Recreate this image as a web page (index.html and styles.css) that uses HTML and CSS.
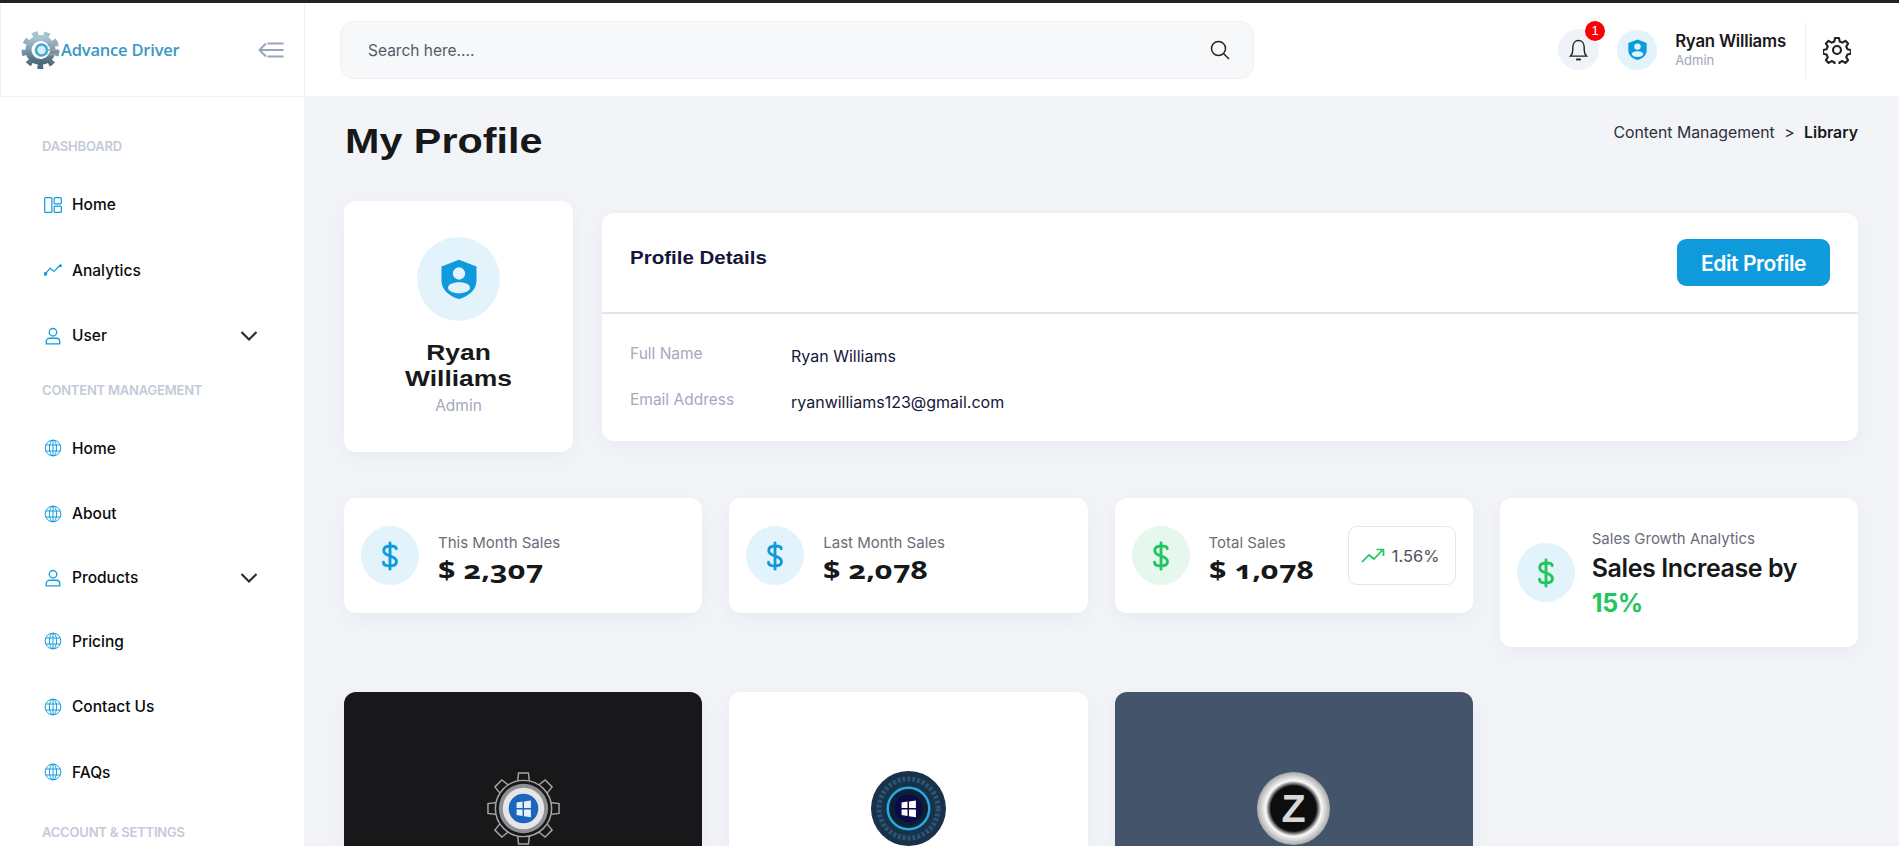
FILE: index.html
```html
<!doctype html>
<html lang="en">
  <head>
    <meta charset="utf-8">
    <title>My Profile</title>
    <link rel="stylesheet" href="styles.css">
  </head>
  <body>
    <svg class="sprite" xmlns="http://www.w3.org/2000/svg">
      <symbol id="i-globe" viewBox="0 0 24 24" fill="none" stroke="currentColor" stroke-width="1.3">
        <circle cx="12" cy="12" r="10.5"/>
        <ellipse cx="12" cy="12" rx="4.8" ry="10.5"/>
        <path d="M12 1.5v21M2.4 8h19.2M2.4 16h19.2"/>
      </symbol>
      <symbol id="i-user" viewBox="0 0 24 24" fill="none" stroke="currentColor" stroke-width="1.7">
        <circle cx="12" cy="7" r="5"/>
        <path d="M3 22.500v-3.200c0-2.600 2-4.300 4.500-4.300h9c2.500 0 4.500 1.700 4.500 4.300v3.200z"/>
      </symbol>
      <symbol id="i-chev" viewBox="0 0 18 12" fill="none" stroke="currentColor" stroke-width="2.200">
        <path d="M1.500 2l7.500 7.500L16.500 2"/>
      </symbol>
      <symbol id="i-shield" viewBox="0 0 24 24">
        <path fill="currentColor" fill-rule="evenodd" d="M12 0.500l10.500 4v8.500c0 5.500-5 9.500-10.500 11-5.500-1.500-10.500-5.500-10.500-11V4.500zM12 5a3.700 3.700 0 1 0 0 7.400A3.700 3.700 0 0 0 12 5zm0 9c-3.700 0-6.600 1.400-6.600 3.200S8.300 20.500 12 20.500s6.600-1.500 6.600-3.300S15.700 14 12 14z"/>
      </symbol>
      <symbol id="i-dollar" viewBox="0 0 24 24" fill="none" stroke="currentColor" stroke-width="2.300" stroke-linecap="round">
        <path d="M12 1.500v21M17 6.200C17 4.500 14.800 4 12 4 8.800 4 7 5.300 7 7.700c0 5 10.200 3.300 10.200 8.700C17.200 18.800 15.200 20 12 20c-3 0-5.200-1-5.200-3"/>
      </symbol>
      <linearGradient id="gear-fill" x1="0" y1="0" x2="0" y2="1">
        <stop offset="0" stop-color="#a9c4d1"/>
        <stop offset="1" stop-color="#4f6a7b"/>
      </linearGradient>
      <radialGradient id="ring-fill">
        <stop offset="0.620" stop-color="#0d0d0d"/>
        <stop offset="0.760" stop-color="#fafafa"/>
        <stop offset="1" stop-color="#a8a8a8"/>
      </radialGradient>
    </svg>

    <div class="app">
      <!-- sidebar -->
      <aside class="sidebar">
        <div class="brand">
          <svg class="brand-gear" viewBox="0 0 40 40">
            <circle cx="20" cy="20" r="15.500" fill="none" stroke="url(#gear-fill)" stroke-width="7" stroke-dasharray="5.400 5.420"/>
            <circle cx="20" cy="20" r="12" fill="none" stroke="url(#gear-fill)" stroke-width="6"/>
            <circle cx="21" cy="20" r="8.500" fill="#fff"/>
            <circle cx="21" cy="20" r="5.500" fill="#d9eef6" stroke="#3fa9d0" stroke-width="2.500"/>
            <path d="M27 15.500h11M27 20h11M27 24.500h11" stroke="#8fa6b3" stroke-width="1.400"/>
          </svg>
          <span class="brand-name">Advance Driver</span>
          <svg class="brand-toggle" viewBox="0 0 26 16" fill="none" stroke="#9aa5bb" stroke-width="2">
            <path d="M8 1.500L1.500 8 8 14.500M1.500 8h24M9.500 1.500h16M9.500 14.500h16"/>
          </svg>
        </div>
        <nav class="side-nav">
          <div class="nav-label">DASHBOARD</div>
          <a class="nav-item">
            <svg class="nav-icon" viewBox="0 0 19 17" fill="none" stroke="currentColor" stroke-width="1.300">
              <rect x="0.700" y="0.700" width="7.600" height="15.600" rx="1"/>
              <rect x="10.700" y="0.700" width="7.600" height="6.600" rx="1"/>
              <rect x="10.700" y="9.700" width="7.600" height="6.600" rx="1"/>
            </svg>
            Home
          </a>
          <a class="nav-item">
            <svg class="nav-icon" viewBox="0 0 19 12" fill="none" stroke="currentColor" stroke-width="1.300">
              <path d="M1.500 10l5-6 4 3.500 6-6"/>
              <circle cx="1.500" cy="10" r="1.300" fill="currentColor"/>
              <circle cx="17.300" cy="1.500" r="1" fill="currentColor"/>
            </svg>
            Analytics
          </a>
          <a class="nav-item">
            <svg class="nav-icon"><use href="#i-user"/></svg>
            User
            <svg class="nav-chev"><use href="#i-chev"/></svg>
          </a>
          <div class="nav-label nav-label-next">CONTENT MANAGEMENT</div>
          <a class="nav-item"><svg class="nav-icon"><use href="#i-globe"/></svg>Home</a>
          <a class="nav-item"><svg class="nav-icon"><use href="#i-globe"/></svg>About</a>
          <a class="nav-item nav-item-tight">
            <svg class="nav-icon"><use href="#i-user"/></svg>
            Products
            <svg class="nav-chev"><use href="#i-chev"/></svg>
          </a>
          <a class="nav-item"><svg class="nav-icon"><use href="#i-globe"/></svg>Pricing</a>
          <a class="nav-item"><svg class="nav-icon"><use href="#i-globe"/></svg>Contact Us</a>
          <a class="nav-item"><svg class="nav-icon"><use href="#i-globe"/></svg>FAQs</a>
          <div class="nav-label nav-label-last">ACCOUNT &amp; SETTINGS</div>
        </nav>
      </aside>

      <div class="page">
        <!-- top bar -->
        <header class="topbar">
          <div class="search">
            <span class="search-text">Search here....</span>
            <svg class="search-icon" viewBox="0 0 20 20" fill="none" stroke="#222" stroke-width="1.500">
              <circle cx="8.500" cy="8.500" r="7"/>
              <path d="M13.700 13.700l5.300 5.300"/>
            </svg>
          </div>
          <div class="top-actions">
            <div class="bell">
              <svg class="bell-icon" viewBox="0 0 20 24" fill="none" stroke="#222" stroke-width="1.500">
                <path d="M1.500 19c1.500-1.500 2.500-2.500 2.500-6.500V9.500C4 5.500 6.500 2.500 10 2.500s6 3 6 7v3c0 4 1 5 2.500 6.500z"/>
                <path d="M7.500 22.500h5" stroke-width="2"/>
              </svg>
              <span class="bell-badge">1</span>
            </div>
            <div class="top-avatar"><svg class="top-avatar-icon"><use href="#i-shield"/></svg></div>
            <div class="top-user">
              <div class="top-user-name">Ryan Williams</div>
              <div class="top-user-role">Admin</div>
            </div>
            <div class="top-settings">
              <svg class="gear-icon" viewBox="0 0 24 24" fill="none" stroke="#222" stroke-width="1.800" stroke-linejoin="round">
                <circle cx="12" cy="12" r="3.400"/>
                <path d="M10.300 1.700h3.400l.6 3 2.300 1 2.600-1.600 2.300 2.400-1.600 2.500 1 2.300 3 .7v3.200l-3 .7-1 2.300 1.600 2.500-2.300 2.400-2.600-1.600-2.300 1-.6 3h-3.400l-.6-3-2.300-1-2.600 1.600-2.300-2.400 1.600-2.500-1-2.300-3-.7v-3.200l3-.7 1-2.300-1.600-2.500 2.300-2.400 2.600 1.600 2.300-1z"/>
              </svg>
            </div>
          </div>
        </header>

        <main class="content">
          <div class="title-row">
            <h1>My Profile</h1>
            <div class="crumbs">Content Management <span class="crumbs-sep">&gt;</span> <b>Library</b></div>
          </div>

          <section class="profile-row">
            <div class="card profile-card">
              <div class="profile-avatar"><svg class="profile-avatar-icon"><use href="#i-shield"/></svg></div>
              <div class="profile-name">Ryan Williams</div>
              <div class="profile-role">Admin</div>
            </div>
            <div class="card details-card">
              <div class="details-head">
                <h2>Profile Details</h2>
                <button class="edit-btn">Edit Profile</button>
              </div>
              <dl class="details-body">
                <dt>Full Name</dt>
                <dd>Ryan Williams</dd>
                <dt>Email Address</dt>
                <dd>ryanwilliams123@gmail.com</dd>
              </dl>
            </div>
          </section>

          <section class="stats">
            <div class="card stat">
              <div class="stat-circle"><svg class="stat-dollar"><use href="#i-dollar"/></svg></div>
              <div class="stat-text">
                <div class="stat-label">This Month Sales</div>
                <div class="stat-value">$ 2,307</div>
              </div>
            </div>
            <div class="card stat">
              <div class="stat-circle"><svg class="stat-dollar"><use href="#i-dollar"/></svg></div>
              <div class="stat-text">
                <div class="stat-label">Last Month Sales</div>
                <div class="stat-value">$ 2,078</div>
              </div>
            </div>
            <div class="card stat">
              <div class="stat-circle stat-circle-green"><svg class="stat-dollar green"><use href="#i-dollar"/></svg></div>
              <div class="stat-text">
                <div class="stat-label">Total Sales</div>
                <div class="stat-value">$ 1,078</div>
              </div>
              <div class="trend">
                <svg class="trend-icon" viewBox="0 0 24 16" fill="none" stroke="#22c55e" stroke-width="1.700">
                  <path d="M1 14l7-7 5 4 9-9.500M15.500 1.500H22.500V8"/>
                </svg>
                1.56%
              </div>
            </div>
            <div class="card stat stat-growth">
              <div class="stat-circle"><svg class="stat-dollar green"><use href="#i-dollar"/></svg></div>
              <div class="stat-text">
                <div class="stat-label">Sales Growth Analytics</div>
                <div class="growth-text">Sales Increase by <span class="green">15%</span></div>
              </div>
            </div>
          </section>

          <section class="tiles">
            <div class="card tile tile-dark">
              <svg class="tile-logo" viewBox="0 0 76 76">
                <g fill="#18181a" stroke="#a5a5a5" stroke-width="1.500">
                  <path id="gear-tooth" d="M32 11l1-9h10l1 9z"/>
                  <use href="#gear-tooth" transform="rotate(45 38 38)"/>
                  <use href="#gear-tooth" transform="rotate(90 38 38)"/>
                  <use href="#gear-tooth" transform="rotate(135 38 38)"/>
                  <use href="#gear-tooth" transform="rotate(180 38 38)"/>
                  <use href="#gear-tooth" transform="rotate(225 38 38)"/>
                  <use href="#gear-tooth" transform="rotate(270 38 38)"/>
                  <use href="#gear-tooth" transform="rotate(315 38 38)"/>
                  <circle cx="38" cy="38" r="28.500"/>
                </g>
                <circle cx="38" cy="38" r="25" fill="#8d8f92"/>
                <circle cx="38" cy="38" r="21" fill="#e6e6e6"/>
                <circle cx="38" cy="38" r="15" fill="#1b66bd"/>
                <path d="M31 32l6-1v6.500h-6zM38.500 30.800l7-1v7.700h-7zM31 39h6v6.500l-6-1zM38.500 39h7v7.800l-7-1z" fill="#e8f1fb"/>
              </svg>
            </div>
            <div class="card tile tile-light">
              <svg class="tile-logo" viewBox="0 0 76 76">
                <circle cx="38" cy="38" r="38" fill="#17324a"/>
                <circle cx="38" cy="38" r="30" fill="none" stroke="#2e5470" stroke-width="5" stroke-dasharray="3 2"/>
                <circle cx="38" cy="38" r="21" fill="#0c1f33" stroke="#2aa7e0" stroke-width="2.500"/>
                <circle cx="38" cy="38" r="14" fill="#0a0a48"/>
                <path d="M31 32l6-1v6.500h-6zM38.500 30.800l7-1v7.700h-7zM31 39h6v6.500l-6-1zM38.500 39h7v7.800l-7-1z" fill="#fff"/>
              </svg>
            </div>
            <div class="card tile tile-slate">
              <svg class="tile-logo" viewBox="0 0 76 76">
                <circle cx="38" cy="38" r="37" fill="url(#ring-fill)"/>
                <text class="tile-logo-z" x="38" y="52" text-anchor="middle">Z</text>
              </svg>
            </div>
          </section>
        </main>
      </div>
    </div>
  </body>
</html>
```

FILE: styles.css
```css
* {
  box-sizing: border-box;
}
html, body {
  height: 100%;
}
body {
  margin: 0;
  overflow: hidden;
  background-color: #f2f4f8;
  color: #17181a;
  font-family: "Inter", "Noto Sans", sans-serif;
}
.sprite {
  position: absolute;
  width: 0;
  height: 0;
}
.green {
  color: #22c55e;
}
.app {
  display: flex;
  height: 100vh;
  border-top: 3px solid #222;
}

/* sidebar */
.sidebar {
  flex: 0 0 305px;
  overflow: hidden;
  background-color: #fff;
  border-right: 1px solid #f0f2f6;
}
.brand {
  display: flex;
  align-items: center;
  height: 94px;
  padding: 0 20px 0 19px;
  border-bottom: 1px solid #eff1f5;
  border-left: 1px solid #eff1f5;
}
.brand-gear {
  flex: none;
  width: 41px;
  height: 40px;
}
.brand-name {
  font-family: "Open Sans", sans-serif;
  font-size: 16.5px;
  font-weight: 600;
  letter-spacing: -0.2px;
  color: #3a97c4;
}
.brand-toggle {
  width: 26px;
  height: 16px;
  margin-left: auto;
}
.side-nav {
  padding: 39px 0 0 42px;
}
.nav-label {
  height: 20px;
  margin-bottom: 16px;
  font-size: 13px;
  line-height: 20px;
  font-weight: 600;
  letter-spacing: -0.2px;
  color: #c3cad8;
}
.nav-label-next {
  margin-top: 11px;
}
.nav-label-last {
  margin-top: 17px;
}
.nav-item {
  display: flex;
  align-items: center;
  height: 65.5px;
  padding-right: 46px;
  font-size: 15.5px;
  font-weight: 500;
  color: #0b0b0d;
}
.nav-item-tight {
  height: 62px;
}
.nav-icon {
  flex: none;
  width: 18px;
  height: 18px;
  margin: 0 10px 0 2px;
  color: #109cdc;
}
.nav-chev {
  width: 18px;
  height: 12px;
  margin-left: auto;
  color: #2b2d33;
}

/* top bar */
.page {
  flex: 1;
  min-width: 0;
  display: flex;
  flex-direction: column;
}
.topbar {
  flex: none;
  display: flex;
  align-items: center;
  height: 93px;
  padding: 0 36px 0 35px;
  background-color: #fff;
}
.search {
  display: flex;
  align-items: center;
  justify-content: space-between;
  width: 914px;
  height: 58px;
  padding: 0 23px 0 27px;
  background-color: #f7f8f9;
  border: 1px solid #eef0f3;
  border-radius: 14px;
  font-size: 15.5px;
  color: #555b66;
}
.search-text {
  padding-top: 2px;
}
.search-icon {
  width: 20px;
  height: 20px;
}
.top-actions {
  display: flex;
  align-items: center;
  margin-left: auto;
}
.bell {
  position: relative;
  display: flex;
  align-items: center;
  justify-content: center;
  width: 41px;
  height: 41px;
  border-radius: 50%;
  background-color: #eff2f6;
}
.bell-icon {
  width: 19px;
  height: 23px;
}
.bell-badge {
  position: absolute;
  top: -8px;
  right: -6px;
  width: 20px;
  height: 20px;
  border-radius: 50%;
  background-color: #fb0007;
  color: #fff;
  font-family: "Liberation Sans", sans-serif;
  font-size: 13px;
  line-height: 20px;
  text-align: center;
}
.top-avatar {
  display: flex;
  align-items: center;
  justify-content: center;
  width: 40px;
  height: 40px;
  margin-left: 18px;
  border-radius: 50%;
  background-color: #e3f3fb;
}
.top-avatar-icon {
  width: 21px;
  height: 23px;
  color: #0f9bdb;
}
.top-user {
  margin-left: 18px;
  padding-right: 19px;
}
.top-user-name {
  font-size: 16.8px;
  line-height: 20px;
  font-weight: 600;
  letter-spacing: -0.2px;
}
.top-user-role {
  font-size: 13px;
  line-height: 15px;
  margin-top: 2px;
  color: #a0a5b8;
}
.top-settings {
  display: flex;
  align-items: center;
  height: 56px;
  padding: 0 12px 0 17px;
  border-left: 1px solid #eceef2;
}
.gear-icon {
  width: 28px;
  height: 28px;
}

/* content */
.content {
  flex: 1;
  padding: 0 41px 0 39px;
}
.title-row {
  display: flex;
  justify-content: space-between;
  height: 105px;
}
/* headings are drawn wider than the installed fonts, so stretch them */
h1 {
  margin: 25px 0 0 1px;
  font-family: "Liberation Sans", sans-serif;
  font-size: 35px;
  line-height: 40px;
  font-weight: 700;
  color: #17181a;
  transform: scaleX(1.18);
  transform-origin: left;
}
.crumbs {
  margin-top: 27px;
  font-size: 15.8px;
  line-height: 20px;
  color: #2c2f3a;
}
.crumbs b {
  font-weight: 600;
  color: #17181a;
}
.crumbs-sep {
  margin: 0 5px;
}
.card {
  background-color: #fff;
  border-radius: 12px;
  box-shadow: 0 6px 20px rgba(40, 50, 90, 0.05);
}

.profile-row {
  display: flex;
  align-items: center;
  gap: 29px;
}
.profile-card {
  flex: 0 0 229px;
  height: 251px;
  padding-top: 36px;
  text-align: center;
}
.profile-avatar {
  display: flex;
  align-items: center;
  justify-content: center;
  width: 83px;
  height: 84px;
  margin: 0 auto 19px;
  border-radius: 50%;
  background-color: #e3f3fb;
}
.profile-avatar-icon {
  width: 40px;
  height: 46px;
  color: #0f9bdb;
}
.profile-name {
  padding: 0 50px;
  font-family: "Liberation Sans", sans-serif;
  font-size: 22px;
  line-height: 26px;
  font-weight: 700;
  transform: scaleX(1.2);
}
.profile-role {
  margin-top: 4px;
  font-size: 15.5px;
  line-height: 20px;
  color: #a4a9bd;
}
.details-card {
  flex: 1;
  height: 228px;
}
.details-head {
  display: flex;
  align-items: center;
  justify-content: space-between;
  height: 101px;
  padding: 0 28px;
  border-bottom: 2px solid #e2e4ea;
}
h2 {
  margin: 0 0 8px;
  font-family: "Liberation Sans", sans-serif;
  font-size: 18px;
  font-weight: 700;
  color: #14163a;
  transform: scaleX(1.14);
  transform-origin: left;
}
.edit-btn {
  width: 153px;
  height: 47px;
  padding: 2px 0 0;
  border: 0;
  border-radius: 9px;
  background-color: #0f9bdb;
  color: #fff;
  font-family: "Inter", sans-serif;
  font-size: 21px;
  font-weight: 600;
  letter-spacing: -0.4px;
}
.details-body {
  display: grid;
  grid-template-columns: 161px 1fr;
  row-gap: 24px;
  margin: 0;
  padding: 30px 28px 0;
  line-height: 20px;
}
.details-body dt {
  font-size: 15.500px;
  color: #a4a9bd;
}
.details-body dd {
  margin: 2px 0 0;
  font-size: 16px;
  color: #14163a;
}

/* stats */
.stats {
  display: grid;
  grid-template-columns: repeat(4, 1fr);
  gap: 27px;
  align-items: start;
  margin-top: 46px;
}
.stat {
  display: flex;
  align-items: center;
  height: 115px;
  padding: 0 17px;
}
.stat-growth {
  height: 149px;
}
.stat-circle {
  flex: none;
  display: flex;
  align-items: center;
  justify-content: center;
  width: 58px;
  height: 59px;
  margin-right: 19px;
  border-radius: 50%;
  background-color: #e3f3fb;
  color: #0f9bdb;
}
.stat-growth .stat-circle {
  margin-right: 17px;
}
.stat-circle-green {
  background-color: #e6f8ee;
}
.stat-dollar {
  width: 30px;
  height: 30px;
}
.stat-text {
  padding-top: 8px;
}
.stat-growth .stat-text {
  padding-top: 4px;
}
.stat-label {
  font-size: 15px;
  line-height: 19px;
  color: #6a6d78;
}
.stat-value {
  font-family: "Noto Sans", sans-serif;
  font-variant-numeric: oldstyle-nums;
  font-size: 25px;
  line-height: 34px;
  font-weight: 700;
  color: #17181a;
  transform: scaleX(1.22);
  transform-origin: left;
}
.trend {
  display: flex;
  align-items: center;
  gap: 7px;
  width: 108px;
  height: 59px;
  margin-left: auto;
  padding-left: 12px;
  border: 1px solid #e4e6ea;
  border-radius: 9px;
  font-size: 16.5px;
  color: #4c4f58;
}
.trend-icon {
  width: 24px;
  height: 16px;
}
.growth-text {
  margin-top: 3px;
  font-size: 25px;
  line-height: 35px;
  font-weight: 600;
  letter-spacing: -0.4px;
}
.growth-text .green {
  display: block;
  font-weight: 700;
}

/* tiles */
.tiles {
  display: grid;
  grid-template-columns: repeat(4, 1fr);
  gap: 27px;
  margin-top: 45px;
}
.tile {
  display: flex;
  justify-content: center;
  height: 360px;
  padding-top: 79px;
}
.tile-dark {
  background-color: #18181a;
}
.tile-light {
  background-color: #fff;
}
.tile-slate {
  background-color: #44546a;
}
.tile-logo {
  width: 75px;
  height: 75px;
}
.tile-logo-z {
  font-family: "Liberation Sans", sans-serif;
  font-size: 40px;
  font-weight: 700;
  fill: #d8d8d8;
}
```
